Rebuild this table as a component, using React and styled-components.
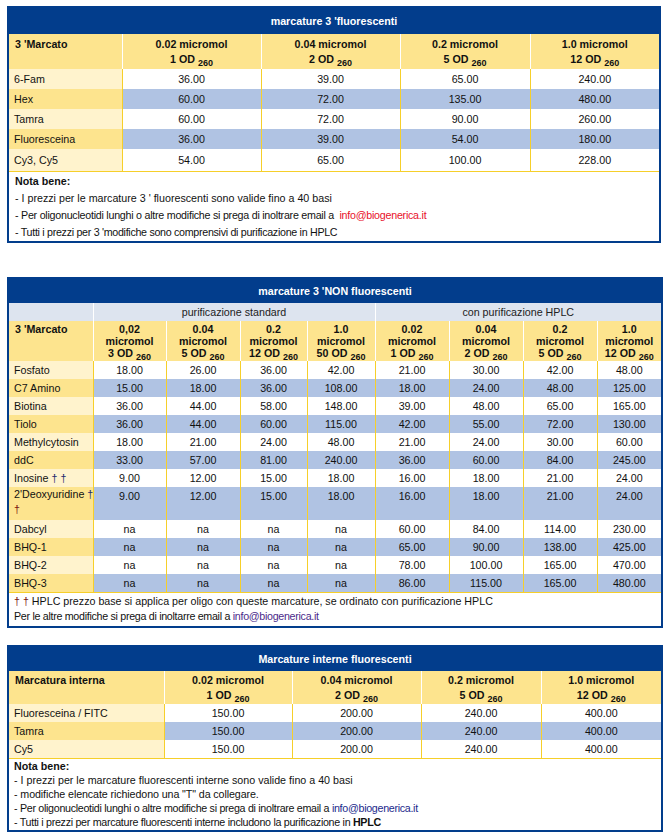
import React from 'react';
import styled, { createGlobalStyle } from 'styled-components';

const GlobalStyle = createGlobalStyle`
  body {
    margin: 0;
    background: #fff;
    font-family: "Liberation Sans", Arial, sans-serif;
    font-size: 10.7px;
    color: #111;
  }
`;

const BLUE = '#023d8c';
const YELLOW = '#fde48e';
const PALE = '#fff3cd';
const ROW_BLUE = '#b0c3e3';
const LINE = '#f6cf2a';

const Page = styled.div`
  padding: 6px 7px 10px 7px;
  width: 654px;
  display: flex;
  flex-direction: column;
`;

const Table = styled.table`
  width: 654px;
  border-collapse: collapse;
  table-layout: fixed;
  border: 2px solid ${BLUE};
  margin-bottom: ${p => p.$gap || 0}px;
`;

const TitleCell = styled.th`
  background: ${BLUE};
  color: #fff;
  font-weight: bold;
  height: ${p => p.$h}px;
  padding: 0;
  line-height: 14px;
  text-align: center;
  vertical-align: middle;
`;

const GroupCell = styled.td`
  background: #dde4ef;
  height: 18px;
  padding: 0;
  line-height: 16px;
  text-align: center;
  border-left: 1px solid ${p => (p.$first ? '#dde4ef' : '#fff')};
  color: #222;
`;

const HeadCell = styled.th`
  background: ${YELLOW};
  font-weight: bold;
  padding: ${p => p.$pad || '3px 2px 2px 2px'};
  padding-left: ${p => (p.$label ? '6px' : '2px')};
  text-align: ${p => (p.$label ? 'left' : 'center')};
  vertical-align: top;
  line-height: ${p => p.$lh || 15}px;
  border-left: 1px solid #fff;
  &:first-child { border-left: 0; }
`;

const Sub = styled.sub`
  font-size: 9px;
  vertical-align: -3px;
  line-height: 0;
`;

const LabelCell = styled.td`
  background: ${p => (p.$alt ? YELLOW : PALE)};
  height: ${p => p.$h}px;
  padding: 0 2px 0 5px;
  text-align: left;
  vertical-align: ${p => (p.$top ? 'top' : 'middle')};
  line-height: ${p => (p.$top ? '15px' : '14px')};
  border-right: 1px solid ${LINE};
`;

const ValueCell = styled.td`
  background: ${p => (p.$alt ? ROW_BLUE : '#fff')};
  height: ${p => p.$h}px;
  padding: ${p => (p.$top ? '2px 2px 0 2px' : '0 2px')};
  text-align: center;
  vertical-align: ${p => (p.$top ? 'top' : 'middle')};
  line-height: 14px;
  border-left: 1px solid ${LINE};
`;

const NoteCell = styled.td`
  padding: ${p => p.$pad};
  line-height: ${p => p.$lh}px;
  vertical-align: top;
  border-top: 1px solid ${LINE};
`;

const NoteTitle = styled.div`
  font-weight: bold;
`;

const NoteLine = styled.div`
  letter-spacing: ${p => p.$ls || 0}px;
  white-space: nowrap;
`;

const Mail = styled.span`
  color: ${p => p.$color};
`;

const Dagger = styled.span`
  color: ${p => p.$color || '#7a1010'};
`;

const NoWrap = styled.span`
  white-space: nowrap;
`;

const Head = ({ top, sub }) => (
  <>
    {top}
    <br />
    {sub} OD <Sub>260</Sub>
  </>
);

const table1 = [
  ['6-Fam', '36.00', '39.00', '65.00', '240.00'],
  ['Hex', '60.00', '72.00', '135.00', '480.00'],
  ['Tamra', '60.00', '72.00', '90.00', '260.00'],
  ['Fluoresceina', '36.00', '39.00', '54.00', '180.00'],
  ['Cy3, Cy5', '54.00', '65.00', '100.00', '228.00'],
];

const table2 = [
  ['Fosfato', '18.00', '26.00', '36.00', '42.00', '21.00', '30.00', '42.00', '48.00'],
  ['C7 Amino', '15.00', '18.00', '36.00', '108.00', '18.00', '24.00', '48.00', '125.00'],
  ['Biotina', '36.00', '44.00', '58.00', '148.00', '39.00', '48.00', '65.00', '165.00'],
  ['Tiolo', '36.00', '44.00', '60.00', '115.00', '42.00', '55.00', '72.00', '130.00'],
  ['Methylcytosin', '18.00', '21.00', '24.00', '48.00', '21.00', '24.00', '30.00', '60.00'],
  ['ddC', '33.00', '57.00', '81.00', '240.00', '36.00', '60.00', '84.00', '245.00'],
  ['Inosine', '9.00', '12.00', '15.00', '18.00', '16.00', '18.00', '21.00', '24.00'],
  ["2'Deoxyuridine", '9.00', '12.00', '15.00', '18.00', '16.00', '18.00', '21.00', '24.00'],
  ['Dabcyl', 'na', 'na', 'na', 'na', '60.00', '84.00', '114.00', '230.00'],
  ['BHQ-1', 'na', 'na', 'na', 'na', '65.00', '90.00', '138.00', '425.00'],
  ['BHQ-2', 'na', 'na', 'na', 'na', '78.00', '100.00', '165.00', '470.00'],
  ['BHQ-3', 'na', 'na', 'na', 'na', '86.00', '115.00', '165.00', '480.00'],
];

const table3 = [
  ['Fluoresceina / FITC', '150.00', '200.00', '240.00', '400.00'],
  ['Tamra', '150.00', '200.00', '240.00', '400.00'],
  ['Cy5', '150.00', '200.00', '240.00', '400.00'],
];

const heads2 = [
  ['0,02', '3'], ['0.04', '5'], ['0.2', '12'], ['1.0', '50'],
  ['0.02', '1'], ['0.04', '2'], ['0.2', '5'], ['1.0', '12'],
];

const Cols = ({ widths }) => (
  <colgroup>
    {widths.map((w, i) => <col key={i} style={{ width: w }} />)}
  </colgroup>
);

function label2(name) {
  if (name === 'Inosine') {
    return <>Inosine <Dagger $color="#1c2a6c">†</Dagger> <Dagger $color="#1c2a6c">†</Dagger></>;
  }
  if (name === "2'Deoxyuridine") {
    return (
      <>
        <NoWrap>2'Deoxyuridine <Dagger $color="#1c2a6c">†</Dagger></NoWrap>
        <br />
        <Dagger>†</Dagger>
      </>
    );
  }
  return name;
}

export default function App() {
  return (
    <Page>
      <GlobalStyle />

      <Table $gap={34}>
        <Cols widths={[114, 139, 139, 130, 130]} />
        <thead>
          <tr><TitleCell colSpan={5} $h={26}>marcature 3 'fluorescenti</TitleCell></tr>
          <tr>
            <HeadCell $label>3 'Marcato</HeadCell>
            <HeadCell><Head top="0.02 micromol" sub="1" /></HeadCell>
            <HeadCell><Head top="0.04 micromol" sub="2" /></HeadCell>
            <HeadCell><Head top="0.2 micromol" sub="5" /></HeadCell>
            <HeadCell><Head top="1.0 micromol" sub="12" /></HeadCell>
          </tr>
        </thead>
        <tbody>
          {table1.map((r, i) => (
            <tr key={r[0]}>
              <LabelCell $alt={i % 2 === 1} $h={i === 4 ? 22 : 20}>{r[0]}</LabelCell>
              {r.slice(1).map((v, j) => (
                <ValueCell key={j} $alt={i % 2 === 1} $h={i === 4 ? 22 : 20}>{v}</ValueCell>
              ))}
            </tr>
          ))}
          <tr>
            <NoteCell colSpan={5} $pad="1px 6px 0 6px" $lh={17}>
              <NoteTitle>Nota bene:</NoteTitle>
              <NoteLine>- I prezzi per le marcature 3 ' fluorescenti sono valide fino a 40 basi</NoteLine>
              <NoteLine $ls={-0.25}>- Per oligonucleotidi lunghi o altre modifiche si prega di inoltrare email a &nbsp;<Mail $color="#e8102a">info@biogenerica.it</Mail></NoteLine>
              <NoteLine $ls={-0.3}>- Tutti i prezzi per 3 'modifiche sono comprensivi di purificazione in HPLC</NoteLine>
            </NoteCell>
          </tr>
        </tbody>
      </Table>

      <Table $gap={17}>
        <Cols widths={[85, 73, 74, 67, 68, 74, 74, 74, 65]} />
        <thead>
          <tr><TitleCell colSpan={9} $h={24}>marcature 3 'NON fluorescenti</TitleCell></tr>
          <tr>
            <GroupCell $first />
            <GroupCell colSpan={4}>purificazione standard</GroupCell>
            <GroupCell colSpan={4}>con purificazione HPLC</GroupCell>
          </tr>
          <tr>
            <HeadCell $label $lh={12} $pad="2px 2px 2px 2px">3 'Marcato</HeadCell>
            {heads2.map(([a, b], i) => (
              <HeadCell key={i} $lh={12} $pad="2px 2px 2px 2px">
                {a}
                <br />
                micromol
                <br />
                {b} OD <Sub>260</Sub>
              </HeadCell>
            ))}
          </tr>
        </thead>
        <tbody>
          {table2.map((r, i) => {
            const tall = i === 7;
            const h = tall ? 31 : 18;
            return (
              <tr key={r[0]}>
                <LabelCell $alt={i % 2 === 1} $h={h} $top={tall}>{label2(r[0])}</LabelCell>
                {r.slice(1).map((v, j) => (
                  <ValueCell key={j} $alt={i % 2 === 1} $h={h} $top={tall}>{v}</ValueCell>
                ))}
              </tr>
            );
          })}
          <tr>
            <NoteCell colSpan={9} $pad="1px 5px 2px 5px" $lh={15}>
              <NoteLine><Dagger>†</Dagger> <Dagger>†</Dagger> HPLC prezzo base si applica per oligo con queste marcature, se ordinato con purificazione HPLC</NoteLine>
              <NoteLine $ls={-0.3}>Per le altre modifiche si prega di inoltarre email a <Mail $color="#4b2a8a">info@biogenerica.it</Mail></NoteLine>
            </NoteCell>
          </tr>
        </tbody>
      </Table>

      <Table>
        <Cols widths={[156, 128, 129, 120, 121]} />
        <thead>
          <tr><TitleCell colSpan={5} $h={24}>Marcature interne fluorescenti</TitleCell></tr>
          <tr>
            <HeadCell $label $pad="2px 2px 1px 2px">Marcatura interna</HeadCell>
            <HeadCell $pad="2px 2px 1px 2px"><Head top="0.02 micromol" sub="1" /></HeadCell>
            <HeadCell $pad="2px 2px 1px 2px"><Head top="0.04 micromol" sub="2" /></HeadCell>
            <HeadCell $pad="2px 2px 1px 2px"><Head top="0.2 micromol" sub="5" /></HeadCell>
            <HeadCell $pad="2px 2px 1px 2px"><Head top="1.0 micromol" sub="12" /></HeadCell>
          </tr>
        </thead>
        <tbody>
          {table3.map((r, i) => (
            <tr key={r[0]}>
              <LabelCell $alt={i % 2 === 1} $h={18}>{r[0]}</LabelCell>
              {r.slice(1).map((v, j) => (
                <ValueCell key={j} $alt={i % 2 === 1} $h={18}>{v}</ValueCell>
              ))}
            </tr>
          ))}
          <tr>
            <NoteCell colSpan={5} $pad="0 5px 1px 5px" $lh={14}>
              <NoteTitle>Nota bene:</NoteTitle>
              <NoteLine>- I prezzi per le marcature fluorescenti interne sono valide fino a 40 basi</NoteLine>
              <NoteLine $ls={-0.1}>- modifiche elencate richiedono una "T" da collegare.</NoteLine>
              <NoteLine $ls={-0.3}>- Per oligonucleotidi lunghi o altre modifiche si prega di inoltrare email a <Mail $color="#1c2a8c">info@biogenerica.it</Mail></NoteLine>
              <NoteLine $ls={-0.3}>- Tutti i prezzi per marcature fluorescenti interne includono la purificazione in <b>HPLC</b></NoteLine>
            </NoteCell>
          </tr>
        </tbody>
      </Table>
    </Page>
  );
}
